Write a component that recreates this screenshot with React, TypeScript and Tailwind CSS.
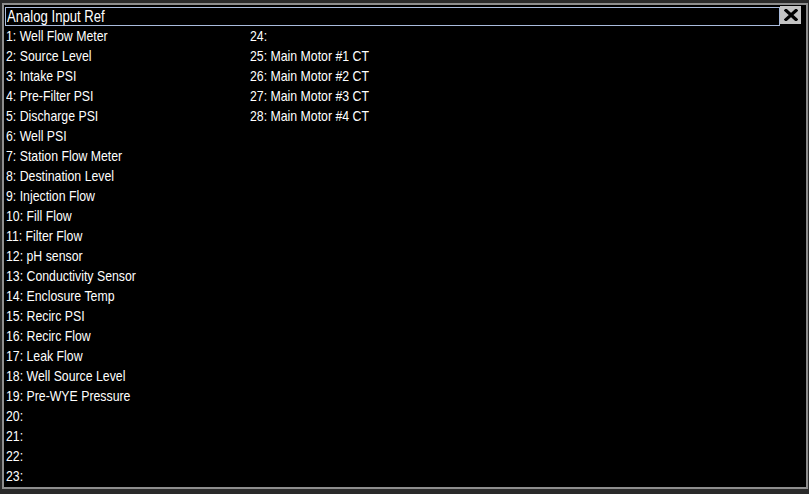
import React from "react";

const col1 = [
  "1: Well Flow Meter",
  "2: Source Level",
  "3: Intake PSI",
  "4: Pre-Filter PSI",
  "5: Discharge PSI",
  "6: Well PSI",
  "7: Station Flow Meter",
  "8: Destination Level",
  "9: Injection Flow",
  "10: Fill Flow",
  "11: Filter Flow",
  "12: pH sensor",
  "13: Conductivity Sensor",
  "14: Enclosure Temp",
  "15: Recirc PSI",
  "16: Recirc Flow",
  "17: Leak Flow",
  "18: Well Source Level",
  "19: Pre-WYE Pressure",
  "20:",
  "21:",
  "22:",
  "23:",
];
const col2 = [
  "24:",
  "25: Main Motor #1 CT",
  "26: Main Motor #2 CT",
  "27: Main Motor #3 CT",
  "28: Main Motor #4 CT",
];

export default function App() {
  return (
    <div className="w-[809px] h-[494px] bg-[#2a2a2a] pt-[3px] pl-[2px] overflow-hidden">
      <div
        className="w-[806px] h-[486px] border-2 border-[#8e8e8e] bg-black flex flex-col text-white"
        style={{ fontFamily: '"Liberation Sans Narrow", "Arial Narrow", "Liberation Sans", Arial, sans-serif' }}
      >
        <div className="flex items-start pt-[1px] pl-[1px]">
          <div className="w-[775px] h-[19px] mt-[1px] border border-[#a9bbdc] flex items-center pl-[1px] text-[16px] leading-none">
            <span className="inline-block origin-left scale-x-[0.82] whitespace-nowrap">Analog Input Ref</span>
          </div>
          <div className="w-[21px] h-[18px] bg-[#c3c3c3] flex items-center justify-center">
            <svg width="14" height="12" viewBox="0 0 14 12">
              <path d="M2 1.5 L12 10.5 M12 1.5 L2 10.5" stroke="#000" strokeWidth="3.2" strokeLinecap="square" />
            </svg>
          </div>
        </div>
        <div className="flex pl-[2px] text-[15px] leading-[20px]">
          <div className="w-[244px] flex flex-col">
            {col1.map((t) => (
              <div key={t} className="h-[20px] whitespace-nowrap">
                <span className="inline-block origin-left scale-x-[0.82]">{t}</span>
              </div>
            ))}
          </div>
          <div className="flex flex-col">
            {col2.map((t) => (
              <div key={t} className="h-[20px] whitespace-nowrap">
                <span className="inline-block origin-left scale-x-[0.82]">{t}</span>
              </div>
            ))}
          </div>
        </div>
      </div>
    </div>
  );
}
